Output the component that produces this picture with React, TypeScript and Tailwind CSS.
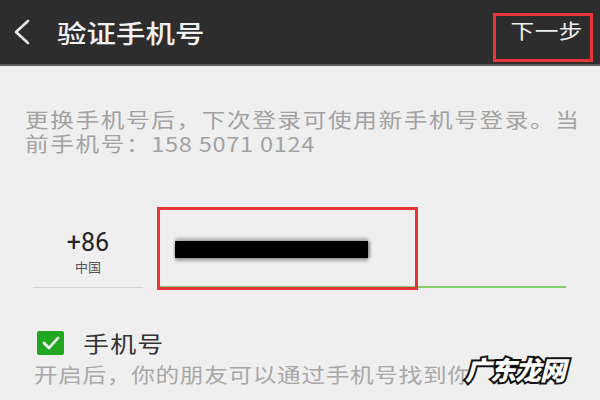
export default function App() {
  const cjk = "font-['Noto_Sans_CJK_SC','Noto_Sans',sans-serif]";

  return (
    <div className={`relative h-[400px] w-[600px] overflow-hidden bg-[#efefef] ${cjk}`}>
      {/* ── Header ─────────────────────────────── */}
      <div className="flex h-[66px] items-center border-b-2 border-[#5a5a5a] bg-[#2d2d2d]">
        <svg className="ml-[13px] shrink-0" width="18" height="26" viewBox="0 0 18 26" fill="none">
          <polyline points="15,2 3,13 15,24" stroke="#ececec" strokeWidth="2.6" strokeLinecap="round" strokeLinejoin="round" />
        </svg>
        <span className="ml-[26px] inline-block origin-left scale-x-[1.18] text-[25px] font-medium leading-none text-[#f2f2f2]">
          验证手机号
        </span>
        <div className="mb-[2px] ml-auto mr-[7px] flex h-[49px] w-[100px] items-start justify-center self-end border-[3px] border-[#e8353b] pl-[8px] pt-[5px]">
          <span className="inline-block scale-x-[1.18] text-[20px] leading-none tracking-[0.5px] text-[#ededed]">下一步</span>
        </div>
      </div>

      {/* ── Hint ───────────────────────────────── */}
      <p className="ml-[25px] mt-[42px] w-fit origin-left scale-x-[1.18] whitespace-nowrap text-[20px] leading-[24px] tracking-[1.4px] text-[#a2a2a2]">
        更换手机号后，下次登录可使用新手机号登录。当
        <br />
        前手机号：<span className="tracking-[0.6px]">158 5071 0124</span>
      </p>

      {/* ── Phone input row ────────────────────── */}
      <div className="mt-[49px] flex items-end">
        <div className="ml-[33px] flex w-[110px] flex-col items-center border-b border-[#d2d2d2] pb-[14px]">
          <span className="font-['Roboto',sans-serif] text-[25px] leading-none text-[#222]">+86</span>
          <span className="mt-[5px] text-[13px] leading-none text-[#555]">中国</span>
        </div>
        <div className="relative ml-[14px] h-[83px] w-[409px] border-b-2 border-[#86cf6a] pl-[18px] pt-[36px]">
          <div className="h-[17px] w-[193px] bg-black shadow-[0_-3px_3px_rgba(0,0,0,0.25),0_3px_3px_rgba(0,0,0,0.3),3px_0_2px_rgba(0,0,0,0.2)]" />
          <div className="absolute left-0 top-[2px] h-[83px] w-[261px] border-[3px] border-[#e8353b]" />
        </div>
      </div>

      {/* ── Checkbox ───────────────────────────── */}
      <div className="ml-[37px] mt-[42px] flex items-center gap-[19px]">
        <div className="flex h-[24px] w-[27px] items-center justify-center rounded-[2px] bg-[#22a722]">
          <svg width="19" height="14" viewBox="0 0 19 14" fill="none">
            <polyline points="3,7 8,12 17,2" stroke="#fff" strokeWidth="2.6" strokeLinecap="round" strokeLinejoin="round" />
          </svg>
        </div>
        <span className="inline-block origin-left scale-x-[1.18] text-[22px] leading-[25px] tracking-[1px] text-[#333]">手机号</span>
      </div>
      <p className="ml-[34px] mt-[8px] w-fit origin-left scale-x-[1.18] whitespace-nowrap text-[20px] leading-[24px] tracking-[0.6px] text-[#a8a8a8]">
        开启后，你的朋友可以通过手机号找到你
      </p>

      {/* watermark */}
      <span className="absolute left-[465px] top-[354px] text-[26px] font-black italic leading-[30px] tracking-[-1px] text-white [-webkit-text-stroke:4px_#111] [paint-order:stroke_fill]">
        广东龙网
      </span>
    </div>
  );
}
